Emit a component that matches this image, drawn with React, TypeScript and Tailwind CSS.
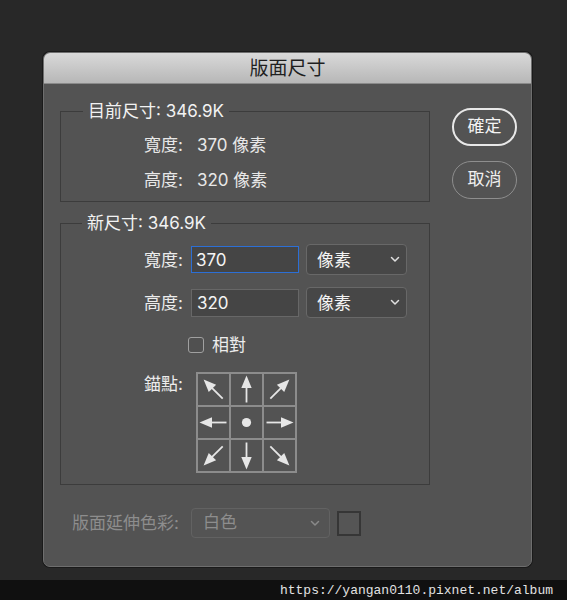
import React from "react";

const FONT = { fontFamily: 'Inter, "Noto Sans CJK TC", sans-serif' };

function Arrow({ angle }: { angle: number }) {
  return (
    <svg width="31" height="31" viewBox="0 0 31 31">
      <g transform={`rotate(${angle} 15.5 15.5)`}>
        <line x1="2.5" y1="15.5" x2="18.5" y2="15.5" stroke="#e6e6e6" strokeWidth="1.8" />
        <polygon points="29.5,15.5 17,10.3 17,20.7" fill="#e6e6e6" />
      </g>
    </svg>
  );
}

function Dot() {
  return (
    <svg width="31" height="31" viewBox="0 0 31 31">
      <circle cx="15.5" cy="15.5" r="4.6" fill="#e6e6e6" />
    </svg>
  );
}

function Chevron({ color }: { color: string }) {
  return (
    <svg width="10" height="7" viewBox="0 0 10 7">
      <polyline points="1.5,1.5 5,5 8.5,1.5" fill="none" stroke={color} strokeWidth="1.5" strokeLinecap="round" strokeLinejoin="round" />
    </svg>
  );
}

export default function App() {
  const cells: (number | null)[] = [-135, -90, -45, 180, null, 0, 135, 90, 45];
  return (
    <div className="flex h-[600px] w-[567px] flex-col" style={FONT}>
      <div className="h-[580px] bg-[#282828] pl-[43px] pt-[52px]">
        <div className="flex h-[515px] w-[489px] flex-col overflow-hidden rounded-[7px] border border-[#6e6e6e] bg-[#535353] shadow-[0_0_0_1px_rgba(0,0,0,0.35)]">
          <div className="flex h-[31px] items-center justify-center border-b border-[#8a8a8a] bg-gradient-to-b from-[#d9d9d9] to-[#b7b7b7] text-[19px] leading-none text-[#1f1f1f]">
            版面尺寸
          </div>
          <div className="flex flex-1 flex-col">
            <div className="flex">
              <div className="flex w-[386px] flex-col pl-[16px] pt-[17px]">
                {/* current size */}
                <fieldset className="m-0 border border-[#3c3c3c] p-0 pb-[11px]">
                  <legend className="ml-[22px] px-[5px] text-[17px] leading-[20px] text-[#f2f2f2]">
                    目前尺寸: 346.9K
                  </legend>
                  <div className="flex flex-col gap-[15px] pl-[83px] pt-[14px] text-[17px] leading-[20px] text-[#e8e8e8]">
                    <div className="flex">
                      <span className="w-[39px] whitespace-nowrap">寬度:</span>
                      <span className="ml-[14px]">370 像素</span>
                    </div>
                    <div className="flex">
                      <span className="w-[39px] whitespace-nowrap">高度:</span>
                      <span className="ml-[14px]">320 像素</span>
                    </div>
                  </div>
                </fieldset>

                {/* new size */}
                <fieldset className="m-0 mt-[11px] border border-[#3c3c3c] p-0 pb-[11px]">
                  <legend className="ml-[21px] px-[5px] text-[17px] leading-[20px] text-[#f2f2f2]">
                    新尺寸: 346.9K
                  </legend>
                  <div className="flex flex-col pl-[83px] pt-[11px] text-[17px] leading-[20px] text-[#ececec]">
                    <div className="flex h-[31px] items-center">
                      <span className="w-[39px] whitespace-nowrap">寬度:</span>
                      <div className="ml-[8px] flex h-[27px] w-[108px] items-center border-[1.5px] border-[#2c6fd6] bg-[#454545] pl-[4px] text-[#f4f4f4]">
                        370
                      </div>
                      <div className="ml-[7px] flex h-[31px] w-[101px] items-center justify-between rounded-[4px] border border-[#686868] bg-[#474747] pl-[10px] pr-[6px] text-[#f4f4f4]">
                        <span>像素</span>
                        <Chevron color="#e0e0e0" />
                      </div>
                    </div>
                    <div className="mt-[12px] flex h-[31px] items-center">
                      <span className="w-[39px] whitespace-nowrap">高度:</span>
                      <div className="ml-[8px] flex h-[28px] w-[108px] items-center border border-[#676767] bg-[#454545] pl-[5px] text-[#f4f4f4]">
                        320
                      </div>
                      <div className="ml-[7px] flex h-[31px] w-[101px] items-center justify-between rounded-[4px] border border-[#686868] bg-[#474747] pl-[10px] pr-[6px] text-[#f4f4f4]">
                        <span>像素</span>
                        <Chevron color="#e0e0e0" />
                      </div>
                    </div>
                    <div className="mt-[19px] flex h-[16px] items-center">
                      <div className="ml-[44px] h-[16px] w-[16px] rounded-[3px] border-[1.5px] border-[#a0a0a0] bg-[#505050]" />
                      <span className="ml-[8px]">相對</span>
                    </div>
                    <div className="mt-[19px] flex items-start">
                      <span className="mt-[2px] w-[39px] whitespace-nowrap">錨點:</span>
                      <div className="ml-[13px] grid grid-cols-[repeat(3,31px)] gap-[2px] bg-[#8c8c8c] p-[2px]">
                        {cells.map((a, i) => (
                          <div key={i} className="flex h-[31px] w-[31px] items-center justify-center bg-[#535353]">
                            {a === null ? <Dot /> : <Arrow angle={a} />}
                          </div>
                        ))}
                      </div>
                    </div>
                  </div>
                </fieldset>
              </div>

              <div className="ml-[22px] flex flex-col gap-[15px] pt-[24px]">
                <div className="flex h-[38px] w-[65px] items-center justify-center rounded-full border-2 border-[#e8e8e8] text-[17px] text-[#f4f4f4]">
                  確定
                </div>
                <div className="flex h-[38px] w-[65px] items-center justify-center rounded-full border-[1.5px] border-[#8e8e8e] text-[17px] text-[#f0f0f0]">
                  取消
                </div>
              </div>
            </div>

            <div className="ml-[28px] mt-[23px] flex items-center">
              <span className="w-[111px] whitespace-nowrap text-[17px] leading-[20px] text-[#8d8d8d]">版面延伸色彩:</span>
              <div className="ml-[8px] flex h-[30px] w-[139px] items-center justify-between rounded-[4px] border border-[#626262] bg-[#545454] pl-[11px] pr-[9px] text-[17px] text-[#8d8d8d]">
                <span>白色</span>
                <Chevron color="#8a8a8a" />
              </div>
              <div className="ml-[7px] h-[25px] w-[24px] border-2 border-[#363636] bg-[#555555]" />
            </div>
          </div>
        </div>
      </div>
      <div className="flex h-[20px] items-center justify-end bg-[#101010] pr-[14px]">
        <span className="text-[13px] leading-none text-[#e2e2e2]" style={{ fontFamily: '"Liberation Mono", monospace' }}>
          https://yangan0110.pixnet.net/album
        </span>
      </div>
    </div>
  );
}
